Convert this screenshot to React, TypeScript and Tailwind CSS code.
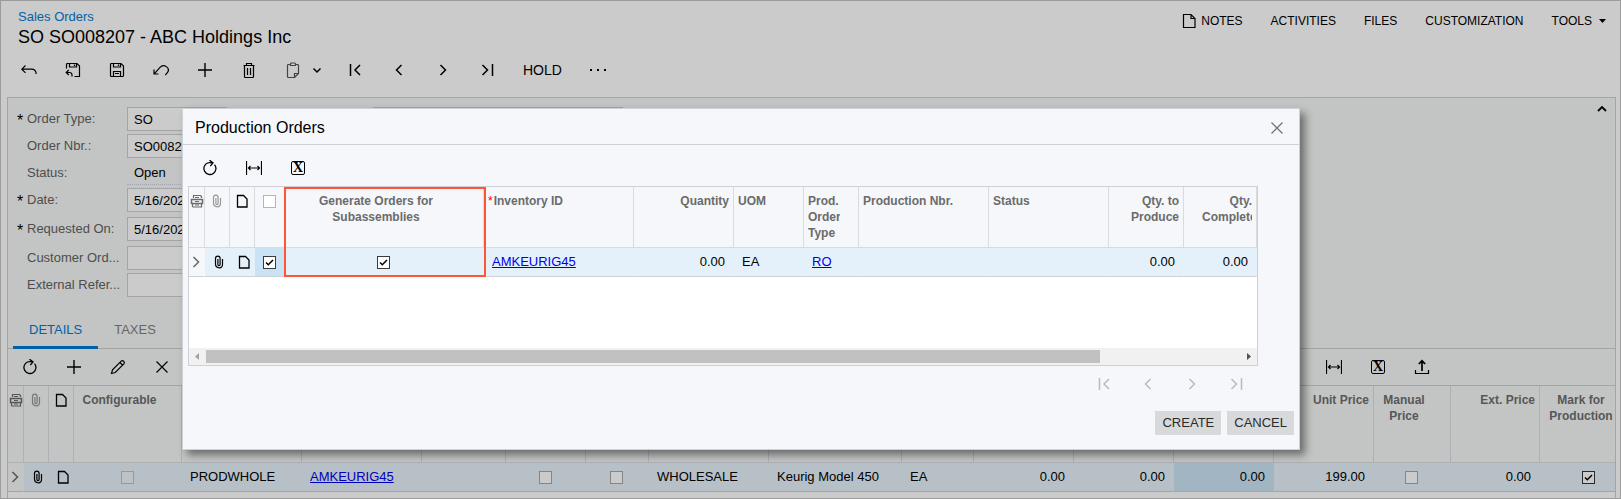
import type { ReactNode } from "react";
import clsx from "clsx";

/* ICONS */

const paths: Record<string, ReactNode> = {
  back: <path d="M4.5 3.500L.8 7.200l3.700 3.700M1 7.200h9.500c3 0 4.700 1.800 4.700 4.800" />,
  saveClose: (
    <>
      <path d="M1.500 6.500V2.500a1 1 0 0 1 1-1h9.500l2.500 2.500v10.500H9.500" />
      <path d="M4.500 1.500v3.500h7v-3.500M9.500 2.500v1.500" />
      <path d="M3.800 8L1.200 10.500l2.600 2.500M1.500 10.500h3c1.600 0 2.500 1 2.500 2.500v1.500" />
    </>
  ),
  save: (
    <>
      <path d="M1.500 2.500a1 1 0 0 1 1-1h9.500l2.500 2.500v9.500a1 1 0 0 1-1 1h-11a1 1 0 0 1-1-1z" />
      <path d="M4.500 1.500v3.500h7v-3.500M9.500 2.500v1.500M4.500 14.500v-5h7v5M6 11.500h4" />
    </>
  ),
  undo: <path d="M1 7.500v4.500h4.500M1.200 11.800L7 5.300c4-4.200 10.500.7 7.500 5.200l-2.200 2.700" />,
  plus: <path strokeWidth="1.400" d="M8 1v14M1 8h14" />,
  trash: <path d="M2.500 3.500h11M5.500 3.500v-2h5v2M3.500 3.500v11a1 1 0 0 0 1 1h7a1 1 0 0 0 1-1v-11M6.500 6v7M9.500 6v7" />,
  clipboard: (
    <path d="M5.500 2.500h-2a1 1 0 0 0-1 1v11a1 1 0 0 0 1 1h6l4-4v-8a1 1 0 0 0-1-1h-2M5.500 3.500v-1.500a1 1 0 0 1 1-1h3a1 1 0 0 1 1 1v1.500zM9.500 15.500v-4h4" />
  ),
  first: <path strokeWidth="1.500" d="M3.500 2v12M13 3L8 8l5 5" />,
  prev: <path strokeWidth="1.500" d="M10.500 3L5.500 8l5 5" />,
  next: <path strokeWidth="1.500" d="M5.500 3l5 5-5 5" />,
  last: <path strokeWidth="1.500" d="M13.500 2v12M3.500 3l5 5-5 5" />,
  down: <path strokeWidth="1.500" d="M4.500 6.500L8 10l3.500-3.500" />,
  up: <path strokeWidth="1.800" d="M4 10l4-4 4 4" />,
  refresh: <path strokeWidth="1.300" d="M12.500 4.600a6 6 0 1 1-7-1.600c1.200-.5 3-.5 5-.2M7.500.2l3.500 2.700-2.700 3.300" />,
  fit: <path d="M.5 1v14M15.500 1v14M2.500 8h11M4.500 6L2.500 8l2 2M11.500 6l2 2-2 2" />,
  pencil: <path d="M1.500 14.500l1-3.700 8.700-8.700c1.500-1.500 4.200 1 2.700 2.700l-8.700 8.700zM10 3.500l2.500 2.500" />,
  close: <path d="M2.500 2.500l11 11M13.500 2.500l-11 11" />,
  upload: (
    <>
      <path strokeWidth="1.700" d="M8 12V2M4.800 5L8 1.800 11.200 5" />
      <path d="M1.500 11v3.500h13v-3.500" />
    </>
  ),
  page: <path strokeWidth="1.300" d="M3.500 2.500h6l3.500 3.500v8h-9.500z" />,
  note: <path d="M2.500 1.500h7.500l4 4v9h-11.500zM10 1.500v4h4" />,
  clip: <path d="M11.500 5v5.500a3 3 0 0 1-3 3.300c-2.500 0-4-1.500-4-3.800V4.500a2.300 2.300 0 0 1 4.600 0v6a1 1 0 0 1-2.200 0V5" />,
  files: (
    <>
      <path d="M4.500 5V2.500h7l1 1V5M3.500 14h9v-3M3.500 11v3" />
      <path strokeWidth="1.500" d="M2.500 6.500h11v4h-11z" />
      <path d="M6 4.500h4M6 8.500h4M6 12h4" />
    </>
  ),
};

function Icon({ name, className = "size-4" }: { name: string; className?: string }) {
  return (
    <svg viewBox="0 0 16 16" fill="none" stroke="currentColor" strokeWidth="1.2" className={clsx("shrink-0", className)} aria-hidden="true">
      {paths[name]}
    </svg>
  );
}

function ToolButton({ label, icon, className }: { label: string; icon: string; className?: string }) {
  return (
    <button type="button" aria-label={label} className={clsx("flex h-8 w-11 items-center justify-center", className)}>
      <Icon name={icon} />
    </button>
  );
}

function ExcelButton() {
  return (
    <button type="button" aria-label="Export to Excel" className="flex h-8 w-11 items-center justify-center">
      <span className="flex size-3.5 items-center justify-center rounded-xs border border-black font-['Liberation_Serif',serif] text-sm leading-3 font-bold">
        X
      </span>
    </button>
  );
}

function Check({ label, checked = false, className }: { label: string; checked?: boolean; className?: string }) {
  return (
    <label className="inline-grid size-[13px] align-middle">
      <input
        type="checkbox"
        aria-label={label}
        defaultChecked={checked}
        className={clsx("peer col-start-1 row-start-1 size-[13px] appearance-none border", className)}
      />
      <svg viewBox="0 0 13 13" fill="none" stroke="black" strokeWidth="1.5" className="invisible col-start-1 row-start-1 size-[13px] peer-checked:visible">
        <path d="M3 6.500l2.300 2.300L10 4" />
      </svg>
    </label>
  );
}

/* FORM */

type FieldProps = { id: string; label: string; value?: string; required?: boolean; size?: string; gap?: string };

function Field({ id, label, value = "", required, size = "w-[150px]", gap = "mb-[3px]" }: FieldProps) {
  return (
    <div className={clsx("flex h-6 items-center", gap)}>
      <span className="w-2.5 shrink-0 pt-1 text-base leading-5 text-black">{required && "*"}</span>
      <label htmlFor={id} className="w-[100px] shrink-0 whitespace-nowrap text-[#4d4d4d]">{label}</label>
      <input id={id} defaultValue={value} className={clsx("h-6 border border-[#a3a5a5] bg-[#cbcbcb] px-1.5", size)} />
    </div>
  );
}

/* TABLES */

type Column = { head: ReactNode; cell: ReactNode; width?: string; align?: string; bg?: string; bare?: boolean };

const headPad: Record<string, string> = {
  left: "text-left pl-1 pr-[18px]",
  center: "text-center pl-1 pr-5",
  right: "text-right pl-[18px] pr-1",
};
const cellPad: Record<string, string> = { left: "text-left px-2", center: "text-center pr-px", right: "text-right px-2" };

type GridProps = { columns: Column[]; className: string; headRow: string; headCell: string; rowCell: string; rowBg: string };

function Grid({ columns, className, headRow, headCell, rowCell, rowBg }: GridProps) {
  return (
    <table className={clsx("table-fixed border-separate border-spacing-0", className)}>
      <colgroup>
        {columns.map((c, i) => <col key={i} className={c.width} />)}
      </colgroup>
      <thead>
        <tr className={headRow}>
          {columns.map((c, i) => (
            <th key={i} className={clsx("border-r border-b pt-1.5 align-top text-xs leading-4 font-bold", headCell, c.bare ? "text-center" : headPad[c.align ?? "left"])}>
              <div className={clsx("overflow-hidden", c.bare && "flex h-4 items-center justify-center")}>{c.head}</div>
            </th>
          ))}
        </tr>
      </thead>
      <tbody>
        <tr className="h-[29px]">
          {columns.map((c, i) => (
            <td key={i} className={clsx("border-r border-b border-r-transparent py-0 leading-4 whitespace-nowrap", rowCell, c.bg ?? rowBg, cellPad[c.bare ? "center" : c.align ?? "left"])}>
              {c.cell}
            </td>
          ))}
        </tr>
      </tbody>
    </table>
  );
}

const link = "text-[#0000ee] underline";
const darkLink = "text-[#0000be] underline";
const grayBox = "border-[#858585] bg-[#cbcbcb]";
const darkBox = "border-[#3a3a3a] bg-white";

const orderColumns: Column[] = [
  { head: <Icon name="files" />, cell: <Icon name="next" className="-mx-1 inline size-4 text-[#555]" />, width: "w-[16px]", bare: true, bg: "bg-[#c3c5c4]" },
  { head: <Icon name="clip" className="size-4 text-[#777]" />, cell: <Icon name="clip" className="ml-1 inline size-4 text-black" />, width: "w-[25px]", bare: true },
  { head: <Icon name="page" className="size-4 text-black" />, cell: <Icon name="page" className="ml-1 inline size-4 text-black" />, width: "w-[25px]", bare: true },
  { head: "Configurable", cell: <Check label="Configurable" className="border-[#999] bg-[#bfc2c4]" />, width: "w-[108px]", align: "center" },
  { head: "", cell: "PRODWHOLE", width: "w-[120px]" },
  { head: "", cell: <a href="#item" className={darkLink}>AMKEURIG45</a>, width: "w-[120px]" },
  { head: "", cell: "", width: "w-[84px]" },
  { head: "", cell: <Check label="Free item" className={grayBox} />, width: "w-[80px]", align: "center" },
  { head: "", cell: <Check label="Mark for PO" className={grayBox} />, width: "w-[63px]", align: "center" },
  { head: "", cell: "WHOLESALE", width: "w-[120px]" },
  { head: "", cell: "Keurig Model 450", width: "w-[133px]" },
  { head: "", cell: "EA", width: "w-[72px]" },
  { head: "", cell: "0.00", width: "w-[100px]", align: "right" },
  { head: "", cell: "0.00", width: "w-[100px]", align: "right" },
  { head: "", cell: "0.00", width: "w-[100px]", align: "right", bg: "bg-[#a2b5c2]" },
  { head: "Unit Price", cell: "199.00", width: "w-[100px]", align: "right" },
  { head: "Manual Price", cell: <Check label="Manual Price" className={grayBox} />, width: "w-[77px]", align: "center" },
  { head: "Ext. Price", cell: "0.00", width: "w-[89px]", align: "right" },
  { head: "Mark for Production", cell: <Check label="Mark for Production" checked className="border-[#2a2a2a] bg-[#cbcbcb]" />, align: "center" },
];

const productionColumns: Column[] = [
  { head: <Icon name="files" />, cell: <Icon name="next" className="-mx-1 inline size-4 text-[#666]" />, width: "w-[16px]", bare: true, bg: "bg-[#f5f7fa]" },
  { head: <Icon name="clip" className="size-4 text-[#999]" />, cell: <Icon name="clip" className="ml-1 inline size-4 text-black" />, width: "w-[25px]", bare: true },
  { head: <Icon name="page" className="size-4 text-black" />, cell: <Icon name="page" className="ml-1 inline size-4 text-black" />, width: "w-[25px]", bare: true },
  { head: <Check label="Select all" className="border-[#b5b5b5] bg-white" />, cell: <Check label="Select row" checked className={darkBox} />, width: "w-[30px]", bare: true, bg: "bg-[#c9e3f4]" },
  { head: "Generate Orders for Subassemblies", cell: <Check label="Generate Orders for Subassemblies" checked className={darkBox} />, width: "w-[199px]", align: "center" },
  { head: <><span className="mr-px font-normal text-[#f00]">*</span>Inventory ID</>, cell: <a href="#item" className={link}>AMKEURIG45</a>, width: "w-[150px]" },
  { head: "Quantity", cell: "0.00", width: "w-[100px]", align: "right" },
  { head: "UOM", cell: "EA", width: "w-[70px]" },
  { head: "Prod. Order Type", cell: <a href="#type" className={link}>RO</a>, width: "w-[55px]" },
  { head: "Production Nbr.", cell: "", width: "w-[130px]" },
  { head: "Status", cell: "", width: "w-[120px]" },
  { head: "Qty. to Produce", cell: "0.00", width: "w-[75px]", align: "right" },
  { head: "Qty. Completed", cell: "0.00", align: "right" },
];

/* DIALOG */

function ProductionDialog() {
  return (
    <section
      role="dialog"
      aria-label="Production Orders"
      className="absolute top-[107px] left-[181px] w-[1118px] border border-[#cdd0d4] bg-[#f5f7fa] shadow-[5px_5px_8px_rgba(0,0,0,0.45)]"
    >
      <div className="flex h-9 items-center justify-between border-b border-[#cdd0d4] px-3 pt-0.5">
        <h2 className="text-base leading-5">Production Orders</h2>
        <button type="button" aria-label="Close" className="flex size-5 items-center justify-center text-[#707070]">
          <Icon name="close" />
        </button>
      </div>

      <div className="flex items-center pt-[7px] pb-0.5 pl-[5px]">
        <ToolButton label="Refresh" icon="refresh" />
        <ToolButton label="Fit to screen" icon="fit" />
        <ExcelButton />
      </div>

      <div className="relative mr-[41px] ml-[5px] border border-[#cdd0d4] bg-white">
        <Grid
          columns={productionColumns}
          className="w-full"
          headRow="h-[61px]"
          headCell="border-[#d9dbdf] bg-[#f5f7fa] text-[#6b6b6b]"
          rowCell="border-b-[#cdd0d4]"
          rowBg="bg-[#e4f1fa]"
        />
        <div className="absolute top-0 left-[95px] h-[90px] w-[202px] border-2 border-[#ff5533]" />
        <div className="h-[71px]" />
        <div className="flex h-[17px] items-center bg-[#f1f1f1]">
          <svg viewBox="0 0 17 17" className="size-[17px]" fill="#a3a3a3"><path d="M10 5v7L6 8.500z" /></svg>
          <div className="grow">
            <div className="h-[13px] w-[86.500%] bg-[#c1c1c1]" />
          </div>
          <svg viewBox="0 0 17 17" className="size-[17px]" fill="#505050"><path d="M7 5v7l4-3.500z" /></svg>
        </div>
      </div>

      <div className="mr-[41px] flex h-9 items-center justify-end text-[#b9bbbd]">
        <ToolButton label="First page" icon="first" />
        <ToolButton label="Previous page" icon="prev" />
        <ToolButton label="Next page" icon="next" />
        <ToolButton label="Last page" icon="last" />
      </div>

      <div className="flex justify-end gap-1.5 pt-[9px] pr-[5px] pb-3.5 text-[#2b2b2b]">
        <button type="button" className="h-6 bg-[#d8d9db] px-[7px]">CREATE</button>
        <button type="button" className="h-6 bg-[#d8d9db] px-[7px]">CANCEL</button>
      </div>
    </section>
  );
}

export default function App() {
  return (
    <main className="relative overflow-hidden border border-[#9c9c9c] bg-[#cbcbcb] font-['Liberation_Sans',Arial,sans-serif] text-[13px] leading-4 text-black">
      {/* HEADER */}
      <header className="flex justify-between pr-3.5 pl-[17px]">
        <div className="pt-2">
          <a href="#orders" className="block text-[#0062a8]">Sales Orders</a>
          <h1 className="text-lg leading-[25px]">SO SO008207 - ABC Holdings Inc</h1>
        </div>
        <nav className="flex h-10 items-center gap-7 text-xs">
          <button type="button" className="flex items-center gap-1"><Icon name="note" />NOTES</button>
          <button type="button">ACTIVITIES</button>
          <button type="button">FILES</button>
          <button type="button">CUSTOMIZATION</button>
          <button type="button" className="flex items-center gap-[7px]">
            TOOLS
            <svg viewBox="0 0 7 4" className="h-1 w-[7px]"><path d="M0 0h7L3.500 4z" /></svg>
          </button>
        </nav>
      </header>

      {/* TOOLBAR */}
      <div className="mb-[7px] flex h-10 items-center pl-1.5">
        <ToolButton label="Back" icon="back" />
        <ToolButton label="Save and close" icon="saveClose" />
        <ToolButton label="Save" icon="save" />
        <ToolButton label="Undo" icon="undo" />
        <ToolButton label="Add" icon="plus" />
        <ToolButton label="Delete" icon="trash" />
        <button type="button" aria-label="Clipboard" className="flex h-8 w-[62px] items-center gap-2 pl-3.5">
          <Icon name="clipboard" className="size-4 text-[#444]" />
          <Icon name="down" />
        </button>
        <ToolButton label="First" icon="first" />
        <ToolButton label="Previous" icon="prev" />
        <ToolButton label="Next" icon="next" />
        <ToolButton label="Last" icon="last" />
        <button type="button" className="h-8 px-3.5 text-sm">HOLD</button>
        <button type="button" aria-label="More" className="flex h-8 w-11 items-center justify-center gap-[5px]">
          <span className="size-0.5 bg-black" />
          <span className="size-0.5 bg-black" />
          <span className="size-0.5 bg-black" />
        </button>
      </div>

      <div className="mr-1 ml-1.5 overflow-hidden border-x border-t border-[#a3a5a5] bg-[#c3c5c4]">
        {/* ORDER FORM */}
        <div className="flex items-start pt-[9px] pr-[5px] pl-[9px]">
          <form>
            <Field id="type" label="Order Type:" value="SO" required size="w-[100px]" />
            <Field id="nbr" label="Order Nbr.:" value="SO008207" />
            <div className="mb-[3px] flex h-6 items-center pl-2.5">
              <span className="w-[100px] text-[#4d4d4d]">Status:</span>
              <span className="h-6 w-[150px] border-b border-dotted border-[#a3a5b5] pl-[7px] leading-6">Open</span>
            </div>
            <Field id="date" label="Date:" value="5/16/2022" required gap="mb-[5px]" />
            <Field id="requested" label="Requested On:" value="5/16/2022" required gap="mb-[5px]" />
            <Field id="customer" label="Customer Ord..." />
            <Field id="external" label="External Refer..." gap="mb-0" />
          </form>
          <input aria-label="Customer" className="ml-24 h-6 w-[250px] border border-[#a3a5a5] bg-[#cbcbcb] px-1.5" />
          <button type="button" aria-label="Collapse" className="ml-auto flex h-1 w-4 items-center justify-center">
            <Icon name="up" />
          </button>
        </div>

        {/* TABS */}
        <div className="flex h-[52px] items-end border-b border-[#a3a5a5] pl-[5px]">
          <button type="button" className="-mb-px h-9 border-b-[3px] border-[#0062a8] px-4 text-[#0062a8]">DETAILS</button>
          <button type="button" className="-mb-px h-9 border-b-[3px] border-transparent px-4 text-[#666]">TAXES</button>
        </div>

        <div className="flex h-[37px] items-center border-b border-[#a3a5a5]">
          <ToolButton label="Refresh" icon="refresh" />
          <ToolButton label="Add row" icon="plus" />
          <ToolButton label="Edit" icon="pencil" />
          <ToolButton label="Delete row" icon="close" />
          <div className="ml-auto flex pr-[171px]">
            <ToolButton label="Fit to screen" icon="fit" />
            <ExcelButton />
            <ToolButton label="Upload" icon="upload" />
          </div>
        </div>

        <Grid
          columns={orderColumns}
          className="w-[calc(100%+24px)]"
          headRow="h-[77px]"
          headCell="border-[#adb0b4] text-[#575757]"
          rowCell="border-b-[#a3a5a5]"
          rowBg="bg-[#b7c0c7]"
        />
        <div className="h-1.5 bg-[#cbcbcb]" />
      </div>

      <ProductionDialog />
    </main>
  );
}
